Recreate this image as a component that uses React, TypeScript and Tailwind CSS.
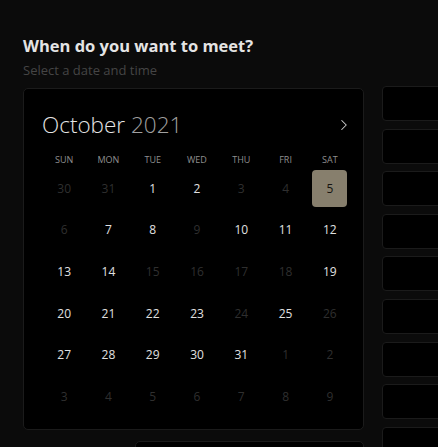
import { ChevronRight } from "lucide-react";

type Day = { n: number; kind: "out" | "off" | "on" | "sel" };

const rows: Day[][] = [
  [
    { n: 30, kind: "out" },
    { n: 31, kind: "out" },
    { n: 1, kind: "on" },
    { n: 2, kind: "on" },
    { n: 3, kind: "off" },
    { n: 4, kind: "off" },
    { n: 5, kind: "sel" },
  ],
  [
    { n: 6, kind: "off" },
    { n: 7, kind: "on" },
    { n: 8, kind: "on" },
    { n: 9, kind: "off" },
    { n: 10, kind: "on" },
    { n: 11, kind: "on" },
    { n: 12, kind: "on" },
  ],
  [
    { n: 13, kind: "on" },
    { n: 14, kind: "on" },
    { n: 15, kind: "off" },
    { n: 16, kind: "off" },
    { n: 17, kind: "off" },
    { n: 18, kind: "off" },
    { n: 19, kind: "on" },
  ],
  [
    { n: 20, kind: "on" },
    { n: 21, kind: "on" },
    { n: 22, kind: "on" },
    { n: 23, kind: "on" },
    { n: 24, kind: "off" },
    { n: 25, kind: "on" },
    { n: 26, kind: "off" },
  ],
  [
    { n: 27, kind: "on" },
    { n: 28, kind: "on" },
    { n: 29, kind: "on" },
    { n: 30, kind: "on" },
    { n: 31, kind: "on" },
    { n: 1, kind: "out" },
    { n: 2, kind: "out" },
  ],
  [
    { n: 3, kind: "out" },
    { n: 4, kind: "out" },
    { n: 5, kind: "out" },
    { n: 6, kind: "out" },
    { n: 7, kind: "out" },
    { n: 8, kind: "out" },
    { n: 9, kind: "out" },
  ],
];

const weekdays = ["SUN", "MON", "TUE", "WED", "THU", "FRI", "SAT"];

const DayCell = ({ day }: { day: Day }) => {
  if (day.kind === "sel") {
    return (
      <div className="flex items-center justify-center">
        <div className="flex h-[37px] w-[35px] items-center justify-center rounded-[4px] bg-[#877f6d] text-[12px] text-[#161410]">
          {day.n}
        </div>
      </div>
    );
  }
  return (
    <div
      className={`flex items-center justify-center text-[12px] ${
        day.kind === "on" ? "text-[#e0e0e0]" : "text-[#2f2f2f]"
      }`}
    >
      {day.n}
    </div>
  );
};

const App = () => {
  return (
    <div className="h-[447px] w-[438px] overflow-hidden bg-[#0b0b0b] pl-[23px] pt-[36px] font-['Open_Sans',sans-serif]">
      <h2 className="text-[16.5px] font-bold leading-5 text-[#e4e4e4]">
        When do you want to meet?
      </h2>
      <p className="mt-[6px] text-[13px] leading-4 text-[#454545]">
        Select a date and time
      </p>

      <div className="mt-[10px] flex gap-[18px]">
        <div className="flex w-[341px] shrink-0 flex-col gap-[11px]">
          <div className="h-[342px] rounded-[5px] border border-[#1b1b1b] bg-black pt-[21px]">
            <div className="flex items-center justify-between pl-[18px] pr-[10px]">
              <span className="text-[22.5px] font-light leading-[30px] text-[#e4e4e4]">
                October <span className="text-[#a0a0a0]">2021</span>
              </span>
              <ChevronRight className="h-[18px] w-[18px] text-[#d0d0d0]" strokeWidth={1.4} />
            </div>
            <div className="ml-[18px] mt-[14px] grid w-[310px] grid-cols-7">
              {weekdays.map((w) => (
                <div
                  key={w}
                  className="text-center text-[9px] leading-3 text-[#8f8f8f]"
                >
                  {w}
                </div>
              ))}
            </div>
            <div className="ml-[18px] mt-[2px] grid w-[310px] auto-rows-[41.6px] grid-cols-7">
              {rows.flat().map((d, i) => (
                <DayCell key={i} day={d} />
              ))}
            </div>
          </div>
          <div className="ml-auto h-[30px] w-[229px] rounded-[5px] border border-[#1b1b1b] bg-black" />
        </div>

        <div className="-mt-[2px] flex w-[120px] shrink-0 flex-col gap-[7.6px]">
          {Array.from({ length: 9 }).map((_, i) => (
            <div
              key={i}
              className="h-[35px] rounded-[4px] border border-[#1b1b1b] bg-black"
            />
          ))}
        </div>
      </div>
    </div>
  );
};

export default App;
